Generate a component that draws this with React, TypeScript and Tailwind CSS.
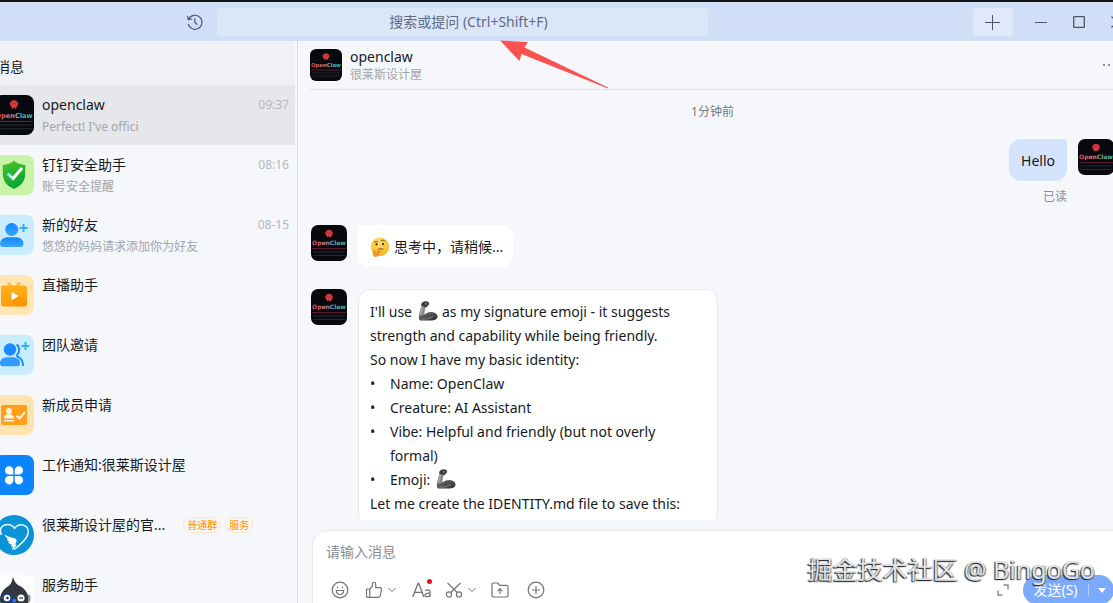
import { useId, type ReactNode } from "react";

type Conversation = {
  name: string;
  preview?: string;
  time?: string;
  tags?: string[];
  icon: ReactNode;
  active?: boolean;
};

function ClawAvatar({ className }: { className: string }) {
  const id = useId();
  return (
    <svg viewBox="0 0 36 36" className={className} aria-hidden="true">
      <defs>
        <linearGradient id={id} x1="0" x2="1">
          <stop offset="0" stopColor="#e0474f" />
          <stop offset="0.35" stopColor="#d8737a" />
          <stop offset="0.6" stopColor="#86a9a6" />
          <stop offset="1" stopColor="#1fc8a8" />
        </linearGradient>
      </defs>
      <rect width="36" height="36" rx="7" fill="#07090f" />
      <circle cx="18" cy="8.2" r="3.5" fill="#d9363b" />
      <path d="M15 7.800h-1M21 7.800h1M16.600 11v1.300M19.400 11v1.300" stroke="#d9363b" strokeWidth="1" />
      <circle cx="16.8" cy="7.6" r="0.5" fill="#7c1f28" />
      <circle cx="19.2" cy="7.6" r="0.5" fill="#7c1f28" />
      <text x="18" y="20.4" textAnchor="middle" fontSize="6" fontWeight="700" fill={`url(#${id})`} fontFamily="DejaVu Sans, sans-serif">
        OpenClaw
      </text>
      <path d="M1 23.7h34" stroke="#7d2a39" strokeWidth="0.8" />
      <path d="M2 27h32M2 30.4h32" stroke="#3a4350" strokeWidth="0.6" />
    </svg>
  );
}

function ShieldIcon() {
  return (
    <svg viewBox="0 0 40 40" className="size-10">
      <defs>
        <linearGradient id="shield" x1="0" y1="0" x2="0.4" y2="1">
          <stop offset="0" stopColor="#4fc424" />
          <stop offset="1" stopColor="#07a535" />
        </linearGradient>
        <linearGradient id="tick" x1="0" x2="1">
          <stop offset="0" stopColor="#7ddcf5" />
          <stop offset="0.5" stopColor="#fff" />
        </linearGradient>
      </defs>
      <rect width="40" height="40" rx="8" fill="#c9f4a8" />
      <path d="M20 5.8c3 2.6 7 4 11.2 4.3V19c0 7.200-4.600 12.200-11.200 15C13.400 31.200 8.800 26.200 8.800 19v-8.900C13 9.800 17 8.400 20 5.800z" fill="url(#shield)" />
      <path d="M13.500 18.500l5.500 5 9-10.500" fill="none" stroke="url(#tick)" strokeWidth="3" />
    </svg>
  );
}

function FriendIcon() {
  return (
    <svg viewBox="0 0 40 40" className="size-10">
      <defs>
        <linearGradient id="person" x1="0" y1="0" x2="0" y2="1">
          <stop offset="0" stopColor="#1487ff" />
          <stop offset="1" stopColor="#3aa5ff" />
        </linearGradient>
      </defs>
      <rect width="40" height="40" rx="8" fill="#c9ecff" />
      <circle cx="17.700" cy="14.500" r="6.500" fill="url(#person)" />
      <path d="M6 29c0-4.500 3.500-6.800 8-6.800h7.500c4.500 0 8 2.300 8 6.800 0 2-1 3-3 3H9c-2 0-3-1-3-3z" fill="url(#person)" />
      <path d="M29.500 9v8M25.500 13h8" stroke="#35aef5" strokeWidth="2" />
    </svg>
  );
}

function LiveIcon() {
  return (
    <svg viewBox="0 0 40 40" className="size-10">
      <defs>
        <linearGradient id="tv" x1="0" y1="0" x2="0" y2="1">
          <stop offset="0" stopColor="#ffb01a" />
          <stop offset="1" stopColor="#fd9c06" />
        </linearGradient>
      </defs>
      <rect width="40" height="40" rx="8" fill="#ffe6b4" />
      <path d="M14.500 7.500l3.500 5M25.500 7.500l-3.500 5" stroke="#ffbe45" strokeWidth="3" />
      <rect x="7" y="10.500" width="26" height="21" rx="2.500" fill="url(#tv)" />
      <path d="M24.500 21L33 26v3c0 1.500-1 2.500-2.500 2.500H22L17.500 25z" fill="#f58e00" opacity="0.5" />
      <path d="M17.500 17v8.200l7.300-4.100z" fill="#fff" />
    </svg>
  );
}

function TeamIcon() {
  return (
    <svg viewBox="0 0 40 40" className="size-10">
      <rect width="40" height="40" rx="8" fill="#c9ecff" />
      <circle cx="16" cy="14.500" r="6.200" fill="#1a8bff" />
      <path d="M6 28.500c0-4.200 3.200-6.300 7.500-6.300h5c4.300 0 7.500 2.100 7.500 6.300 0 1.800-1 2.800-2.800 2.800H8.800C7 31.300 6 30.300 6 28.500z" fill="#2f9bff" />
      <path d="M22.500 9.500c3.200 1.500 3.500 8 .5 10.500-1 1 .5 1.700 2 2.500 2.700 1.500 4 4 4 8.500" fill="none" stroke="#1f8fff" strokeWidth="2" />
      <path d="M31.500 7v8M27.500 11h8" stroke="#35aef5" strokeWidth="2" />
    </svg>
  );
}

function MemberIcon() {
  return (
    <svg viewBox="0 0 40 40" className="size-10">
      <rect width="40" height="40" rx="8" fill="#ffe4b0" />
      <rect x="7" y="10" width="26" height="20" rx="1.800" fill="#ff9f1c" />
      <circle cx="15" cy="16" r="3" fill="#fff4df" />
      <path d="M10 23.500c0-3 2-4.500 5-4.500s5 1.500 5 4.500zM10 25h10v1.600H10z" fill="#fff4df" />
      <path d="M22.500 20.500l3 3 5.500-6.500" fill="none" stroke="#fff4df" strokeWidth="2" />
    </svg>
  );
}

function WorkIcon() {
  return (
    <svg viewBox="0 0 40 40" className="size-10">
      <rect width="40" height="40" rx="8" fill="#0a85ff" />
      <path
        fill="#fff"
        d="M19.300 19.600h-4a4.200 4.200 0 1 1 4-4.200zM20.700 19.600h4a4.200 4.200 0 1 0-4-4.200zM19.300 21h-4a4.200 4.200 0 1 0 4 4.200zM20.700 21h4a4.200 4.200 0 1 1-4 4.200z"
      />
    </svg>
  );
}

function HeartIcon() {
  return (
    <svg viewBox="0 0 40 40" className="size-10">
      <circle cx="20" cy="20" r="20" fill="#0b93d8" />
      <path d="M7.500 20c-2.500-5-.5-9.500 4.500-10.300 3.500-.4 6.800 1 8.500 3.600 2-2.600 5-4 8.300-3.400 5.500 1 7 7.500 3.500 12.600-2.600 4-6.800 8-12.300 12" fill="none" stroke="#e8f7ff" strokeWidth="1.500" />
      <path d="M10.500 19.500c4.500 2.800 8.500 3 11 4.200 1.500.8 1.500 2.300.5 3.800l-.8 2 1.500.2-4.500 6 .6-4.300-1.800-.2 1-1.600c-2-.2-3.300-1.200-3.800-2.500l2 .1c-2-1-3-2-3.500-3.500l2.500.8c-2.700-1.500-4.200-2.800-4.700-5z" fill="#fff" />
    </svg>
  );
}

function ServiceIcon() {
  return (
    <svg viewBox="0 0 40 40" className="size-10">
      <rect width="40" height="40" rx="8" fill="#fdfdfe" />
      <path d="M19 2c1.500 4 2.500 6.500 6 8.500 6 3 9.500 8 9.500 14 0 8-6 13-14.500 13S6 33 6 25c0-6.500 3.500-11 8.500-14C17.500 9 18 6 19 2z" fill="#34373d" />
      <path d="M34 19.500c2 0 2.500 1.500 2.500 4s-1 4-2.500 4z" fill="#8b8e94" />
      <circle cx="13" cy="23" r="4.800" fill="#173f8c" />
      <circle cx="13" cy="23" r="3.300" fill="#f4f7fb" />
      <circle cx="13.500" cy="23" r="1.200" fill="#222" />
      <circle cx="27" cy="23" r="3.600" fill="#f4f7fb" />
      <path d="M25 23h4" stroke="#333" strokeWidth="1.200" />
      <circle cx="20.200" cy="25.500" r="2" fill="#1d7bff" />
    </svg>
  );
}

function ArmEmoji() {
  return (
    <svg viewBox="0 0 20 20" className="mr-1 ml-1.5 inline-block size-5 align-[-4px]" role="img" aria-label="机械臂">
      <defs>
        <linearGradient id="steel" x1="0" y1="0" x2="1" y2="1">
          <stop offset="0" stopColor="#7a7a7c" />
          <stop offset="0.600" stopColor="#454547" />
          <stop offset="1" stopColor="#2e2e30" />
        </linearGradient>
      </defs>
      <path d="M4.300 1.400C6 .2 8.500 0 10.300 1c1.200.8 1 2.400 0 3.200L8 6.500 3.500 5.200c-.6-1.400-.3-2.900.8-3.800z" fill="#3c3c3e" />
      <circle cx="7.800" cy="2.800" r="0.900" fill="#8e8e90" />
      <path d="M3.300 5.200l4.200 1-1.200 6.300 1.500 2.200L4 18.500H1.500C.6 17 .7 15 1.200 12.500z" fill="#88888a" />
      <path d="M4.500 6l-1.800 8" stroke="#b5b5b7" strokeWidth="0.900" />
      <path d="M1.500 14.500c2 .5 4 0 5.500-1.200 2.500-2 5-2.600 8-2 2.500.4 4.500 2 4.500 4.200 0 2.700-2.500 4-7 4H3c-2 0-2.500-2.500-1.500-5z" fill="url(#steel)" />
      <path d="M3 17.800c4 1 9-.2 12-2.300" stroke="#99999b" strokeWidth="0.800" fill="none" />
    </svg>
  );
}

function ThinkingEmoji() {
  return (
    <svg viewBox="0 0 20 20" className="size-5 shrink-0" role="img" aria-label="思考">
      <defs>
        <radialGradient id="face" cx="0.450" cy="0.300" r="0.700">
          <stop offset="0" stopColor="#ffe36b" />
          <stop offset="1" stopColor="#fbb321" />
        </radialGradient>
      </defs>
      <circle cx="10" cy="9.800" r="9.200" fill="url(#face)" />
      <ellipse cx="6.500" cy="7.300" rx="1" ry="1.300" fill="#4b3215" />
      <ellipse cx="13" cy="7" rx="1" ry="1.300" fill="#4b3215" />
      <path d="M4.300 5.200c1-.8 2.300-.9 3.300-.4M11 3.600c1.400-.9 3.200-.6 4.200.6M8 12.300c1.700-.8 3.700-.8 5.200-.2" fill="none" stroke="#6b4518" strokeWidth="0.900" strokeLinecap="round" />
      <path d="M3.300 14.200c.6-1 1.500-.7 1.700.3l.3 1.200 4.300-2.200c1.200-.5 1.800.7.8 1.400l-2.200 1.500c.8.400.8 2-.4 2.700-2 1.200-4.500.5-4.700-1.600z" fill="#f59a1d" stroke="#d97f10" strokeWidth="0.500" />
    </svg>
  );
}

const conversations: Conversation[] = [
  { name: "openclaw", preview: "Perfect! I've offici", time: "09:37", icon: <ClawAvatar className="size-10" />, active: true },
  { name: "钉钉安全助手", preview: "账号安全提醒", time: "08:16", icon: <ShieldIcon /> },
  { name: "新的好友", preview: "悠悠的妈妈请求添加你为好友", time: "08-15", icon: <FriendIcon /> },
  { name: "直播助手", icon: <LiveIcon /> },
  { name: "团队邀请", icon: <TeamIcon /> },
  { name: "新成员申请", icon: <MemberIcon /> },
  { name: "工作通知:很莱斯设计屋", icon: <WorkIcon /> },
  { name: "很莱斯设计屋的官...", tags: ["普通群", "服务"], icon: <HeartIcon /> },
  { name: "服务助手", icon: <ServiceIcon /> },
];

function TitleBar() {
  return (
    <header className="-mr-[23px] flex h-[41px] shrink-0 items-center border-t-2 border-[#17181c] bg-[#d0dff7] text-[#4c566b]">
      <div className="flex w-[217px] shrink-0 justify-end pr-3">
        <button aria-label="历史记录" className="grid size-5 place-items-center">
          <svg viewBox="0 0 18 18" className="size-[18px]" fill="none" stroke="currentColor" strokeWidth="1.200">
            <path d="M2.700 6.200A7 7 0 1 1 2.200 11M1.500 2.800l.8 3.800 3.800-.6M8.800 5.200v4l2.400 2.400" />
          </svg>
        </button>
      </div>
      <input
        aria-label="搜索"
        placeholder="搜索或提问 (Ctrl+Shift+F)"
        className="h-7 max-w-[491px] flex-1 rounded-sm bg-[#dbe6f9] pl-3 text-center text-sm outline-none placeholder:text-[#5f6b82]"
      />
      <div className="ml-auto flex items-center">
        <button aria-label="新建" className="mr-[9px] grid h-7 w-10 place-items-center rounded-sm bg-[#dfe9fa]">
          <svg viewBox="0 0 16 16" className="size-4" stroke="currentColor">
            <path d="M7.500 1v15M0 8.500h15" />
          </svg>
        </button>
        <button aria-label="最小化" className="grid h-7 w-[38px] place-items-center">
          <svg viewBox="0 0 12 12" className="size-3" stroke="currentColor">
            <path d="M0 6.500h12" />
          </svg>
        </button>
        <button aria-label="最大化" className="grid h-7 w-[38px] place-items-center">
          <svg viewBox="0 0 12 12" className="size-3" fill="none" stroke="currentColor" strokeWidth="1.300">
            <rect x="0.700" y="0.700" width="10.600" height="10.600" rx="0.600" />
          </svg>
        </button>
        <button aria-label="关闭" className="grid h-7 w-[38px] place-items-center">
          <svg viewBox="0 0 12 12" className="size-3" stroke="currentColor" strokeWidth="1.200">
            <path d="M0.500 0.500l11 11M11.500 0.500l-11 11" />
          </svg>
        </button>
      </div>
    </header>
  );
}

function Sidebar() {
  return (
    <aside className="w-[298px] shrink-0 overflow-hidden border-r border-[#d9dce3] pr-0.5">
      <h1 className="-ml-1 flex h-11 items-center bg-[#f0f1f4] pt-2 text-sm text-[#171a1d]">消息</h1>
      <ul>
        {conversations.map((c) => (
          <li key={c.name}>
            <a
              href="#"
              className={`flex h-[60px] items-center gap-2 pr-1.5 ${c.active ? "bg-[#e6e7ea]" : ""}`}
            >
              <span className="-ml-1.5 shrink-0">{c.icon}</span>
              <span className="flex h-10 min-w-0 flex-1 flex-col">
                <span className="flex h-5 items-center">
                  <span className="text-sm text-[#171a1d]">{c.name}</span>
                  {c.tags && (
                    <span className="ml-[18px] flex gap-1">
                      {c.tags.map((t) => (
                        <span key={t} className="rounded-full border border-[#fbe6c8] px-[3px] text-[10px] leading-[14px] text-[#ff9200]">
                          {t}
                        </span>
                      ))}
                    </span>
                  )}
                  {c.time && <time className="ml-auto text-xs text-[#b4b7bc]">{c.time}</time>}
                </span>
                <span className="h-5 truncate pt-0.5 text-xs leading-5 text-[#a2a5aa]">{c.preview}</span>
              </span>
            </a>
          </li>
        ))}
      </ul>
    </aside>
  );
}

function Chevron() {
  return (
    <svg viewBox="0 0 8 6" className="h-1.5 w-2" fill="none" stroke="currentColor">
      <path d="M0.500 1L4 4.500 7.500 1" />
    </svg>
  );
}

function Composer() {
  return (
    <form className="mt-2.5 -mr-2 -mb-[11px] ml-3.5 h-[84px] shrink-0 rounded-tl-2xl border border-[#e6e8ec] bg-white pl-[13px]">
      <textarea
        aria-label="消息"
        placeholder="请输入消息"
        rows={1}
        className="mt-[11px] block h-5 w-full resize-none text-sm leading-5 outline-none placeholder:text-[#8a8d92]"
      />
      <div className="mt-[13px] flex h-[30px] items-center text-[#717479]">
        <button type="button" aria-label="表情" className="ml-[5px]">
          <svg viewBox="0 0 18 18" className="size-[18px]" fill="none" stroke="currentColor" strokeWidth="1.200">
            <circle cx="9" cy="9" r="7.800" />
            <path d="M5.300 9.500h7.400c-.2 2.600-1.600 4-3.700 4s-3.500-1.400-3.700-4zM6.500 5.500v1.700M11.500 5.500v1.700" />
          </svg>
        </button>
        <button type="button" aria-label="点赞" className="ml-4 flex items-center gap-[5px]">
          <svg viewBox="0 0 18 18" className="size-[18px]" fill="none" stroke="currentColor" strokeWidth="1.200" strokeLinejoin="round">
            <path d="M1.500 8h3.300v8.300H2.500a1 1 0 0 1-1-1zM4.800 8L7.500 5V2.700c0-2 3.200-1.700 3.200.5v3.500h4.300c1.100 0 1.700 1 1.500 2l-1.200 6c-.2 1-1 1.600-2 1.600H4.800" />
          </svg>
          <Chevron />
        </button>
        <button type="button" aria-label="文字格式" className="relative ml-4 flex w-5 items-center">
          <svg viewBox="0 0 20 18" className="h-[18px] w-5" fill="none" stroke="currentColor" strokeWidth="1.300">
            <path d="M0.700 16L6 2.500h.8L11.800 16M2.700 11.300h7.300M13.300 9.800c1.200-1.300 4.700-1.300 4.700 1.200v5M18 12c-1.500.3-5 .1-5 2.300 0 2.200 4 2 5-.5" />
          </svg>
          <span className="absolute -top-0.5 right-0 size-[5px] rounded-full bg-[#e8101f]" />
        </button>
        <button type="button" aria-label="截图" className="ml-[13px] flex items-center gap-[5px]">
          <svg viewBox="0 0 18 18" className="size-[18px]" fill="none" stroke="currentColor" strokeWidth="1.200">
            <circle cx="4" cy="13.500" r="2.600" />
            <circle cx="14" cy="13.500" r="2.600" />
            <path d="M2.500 2l9.700 9.500M15.500 2l-9.700 9.500" />
          </svg>
          <Chevron />
        </button>
        <button type="button" aria-label="文件" className="ml-[15px]">
          <svg viewBox="0 0 18 18" className="size-[18px]" fill="none" stroke="currentColor" strokeWidth="1.200" strokeLinejoin="round">
            <path d="M1 3.200c0-.8.500-1.200 1.200-1.200h4.500l2 2.300h7c.8 0 1.300.5 1.300 1.200v9.300c0 .8-.5 1.200-1.300 1.200H2.200c-.7 0-1.200-.4-1.200-1.200zM9 13V8M6.500 10.200L9 7.700l2.500 2.500" />
          </svg>
        </button>
        <button type="button" aria-label="更多" className="ml-[18px]">
          <svg viewBox="0 0 18 18" className="size-[18px]" fill="none" stroke="currentColor" strokeWidth="1.200">
            <circle cx="9" cy="9" r="7.800" />
            <path d="M9 5v8M5 9h8" />
          </svg>
        </button>
        <button type="button" aria-label="展开" className="mr-3.5 ml-auto">
          <svg viewBox="0 0 12 12" className="size-3" fill="none" stroke="#85888d" strokeWidth="1.400">
            <path d="M6.500 1H11v4.500M1 6.500V11h4.500" />
          </svg>
        </button>
        <div className="mr-1.5 flex h-[30px] w-[91px] items-center rounded-full bg-[#7baaff] text-white">
          <button type="button" className="w-[66px] border-r border-[#b7d0ff] text-center text-sm leading-3">
            发送(S)
          </button>
          <button type="button" aria-label="发送选项" className="grid flex-1 place-items-center">
            <svg viewBox="0 0 8 5" className="h-[5px] w-2">
              <path d="M0 0h8L4 5z" fill="#fff" />
            </svg>
          </button>
        </div>
      </div>
    </form>
  );
}

function Chat() {
  return (
    <main className="flex min-w-0 flex-1 flex-col overflow-hidden">
      <div className="ml-3 flex h-[49px] shrink-0 items-center gap-2 border-b border-[#dfe1e6]">
        <ClawAvatar className="size-8" />
        <div className="pt-0.5">
          <h2 className="text-sm leading-[18px] text-[#171a1d]">openclaw</h2>
          <p className="text-xs leading-[18px] text-[#a2a5aa]">很莱斯设计屋</p>
        </div>
        <button aria-label="更多选项" className="-mr-1 ml-auto">
          <svg viewBox="0 0 15 4" className="h-1 w-[15px]" fill="#5d6168">
            <circle cx="2" cy="2" r="0.900" />
            <circle cx="7" cy="2" r="0.900" />
            <circle cx="12" cy="2" r="0.900" />
          </svg>
        </button>
      </div>
      <div className="-mr-px min-h-0 flex-1 overflow-hidden pl-[13px]">
        <p className="pt-3 text-center text-xs leading-5 text-[#777a80]">1分钟前</p>
        <div className="mt-[17px] flex justify-end gap-[11px]">
          <div className="flex flex-col items-end">
            <p className="rounded-xl rounded-tr-sm bg-[#d5e4fe] px-3 pt-2.5 pb-2 text-sm leading-6 text-[#171a1d]">Hello</p>
            <span className="mt-1.5 text-xs leading-5 text-[#8b8e94]">已读</span>
          </div>
          <ClawAvatar className="size-9 shrink-0" />
        </div>
        <div className="mt-[18px] flex items-start gap-[11px]">
          <ClawAvatar className="size-9 shrink-0" />
          <p className="flex items-center gap-1 rounded-xl rounded-tl-sm bg-white pt-2.5 pr-2.5 pb-2 pl-3 text-sm leading-6 text-[#171a1d]">
            <ThinkingEmoji />
            <span>思考中，请稍候...</span>
          </p>
        </div>
        <div className="mt-[22px] flex items-start gap-[11px]">
          <ClawAvatar className="size-9 shrink-0" />
          <div className="w-[360px] rounded-xl border border-[#e6e8ec] bg-white px-[11px] py-2.5 text-sm leading-6 text-[#171a1d]">
            <p>
              I'll use
              <ArmEmoji />
              as my signature emoji - it suggests strength and capability while being friendly.
            </p>
            <p>So now I have my basic identity:</p>
            <ul className="list-['•'] pl-5 [&>li]:pl-0">
              {["Name: OpenClaw", "Creature: AI Assistant", "Vibe: Helpful and friendly (but not overly formal)"].map((t) => (
                <li key={t} className="-ml-5 flex">
                  <span className="w-5 shrink-0">•</span>
                  <span>{t}</span>
                </li>
              ))}
              <li className="-ml-5 flex">
                <span className="w-5 shrink-0">•</span>
                <span>
                  Emoji:
                  <ArmEmoji />
                </span>
              </li>
            </ul>
            <p>Let me create the IDENTITY.md file to save this:</p>
          </div>
        </div>
      </div>
      <Composer />
    </main>
  );
}

export default function App() {
  return (
    <div className="relative flex h-screen flex-col overflow-hidden bg-[#f5f7fb] font-['Noto_Sans','Noto_Sans_CJK_SC',sans-serif]">
      <TitleBar />
      <div className="flex min-h-0 flex-1">
        <Sidebar />
        <Chat />
      </div>
      <svg viewBox="0 0 109 49" className="pointer-events-none absolute top-10 left-[500px] h-[49px] w-[109px]" aria-hidden="true">
        <path d="M0 0.500L28 2 24.500 7.500 108 47.500v1L21.500 14l-2 7z" fill="#fb5151" />
      </svg>
      <p className="pointer-events-none absolute right-[18px] bottom-4 text-[25px] leading-9 text-[#e2e2e2] [text-shadow:-1px_1px_1px_#222,1px_1px_1px_#777]">
        掘金技术社区 @ BingoGo
      </p>
    </div>
  );
}
